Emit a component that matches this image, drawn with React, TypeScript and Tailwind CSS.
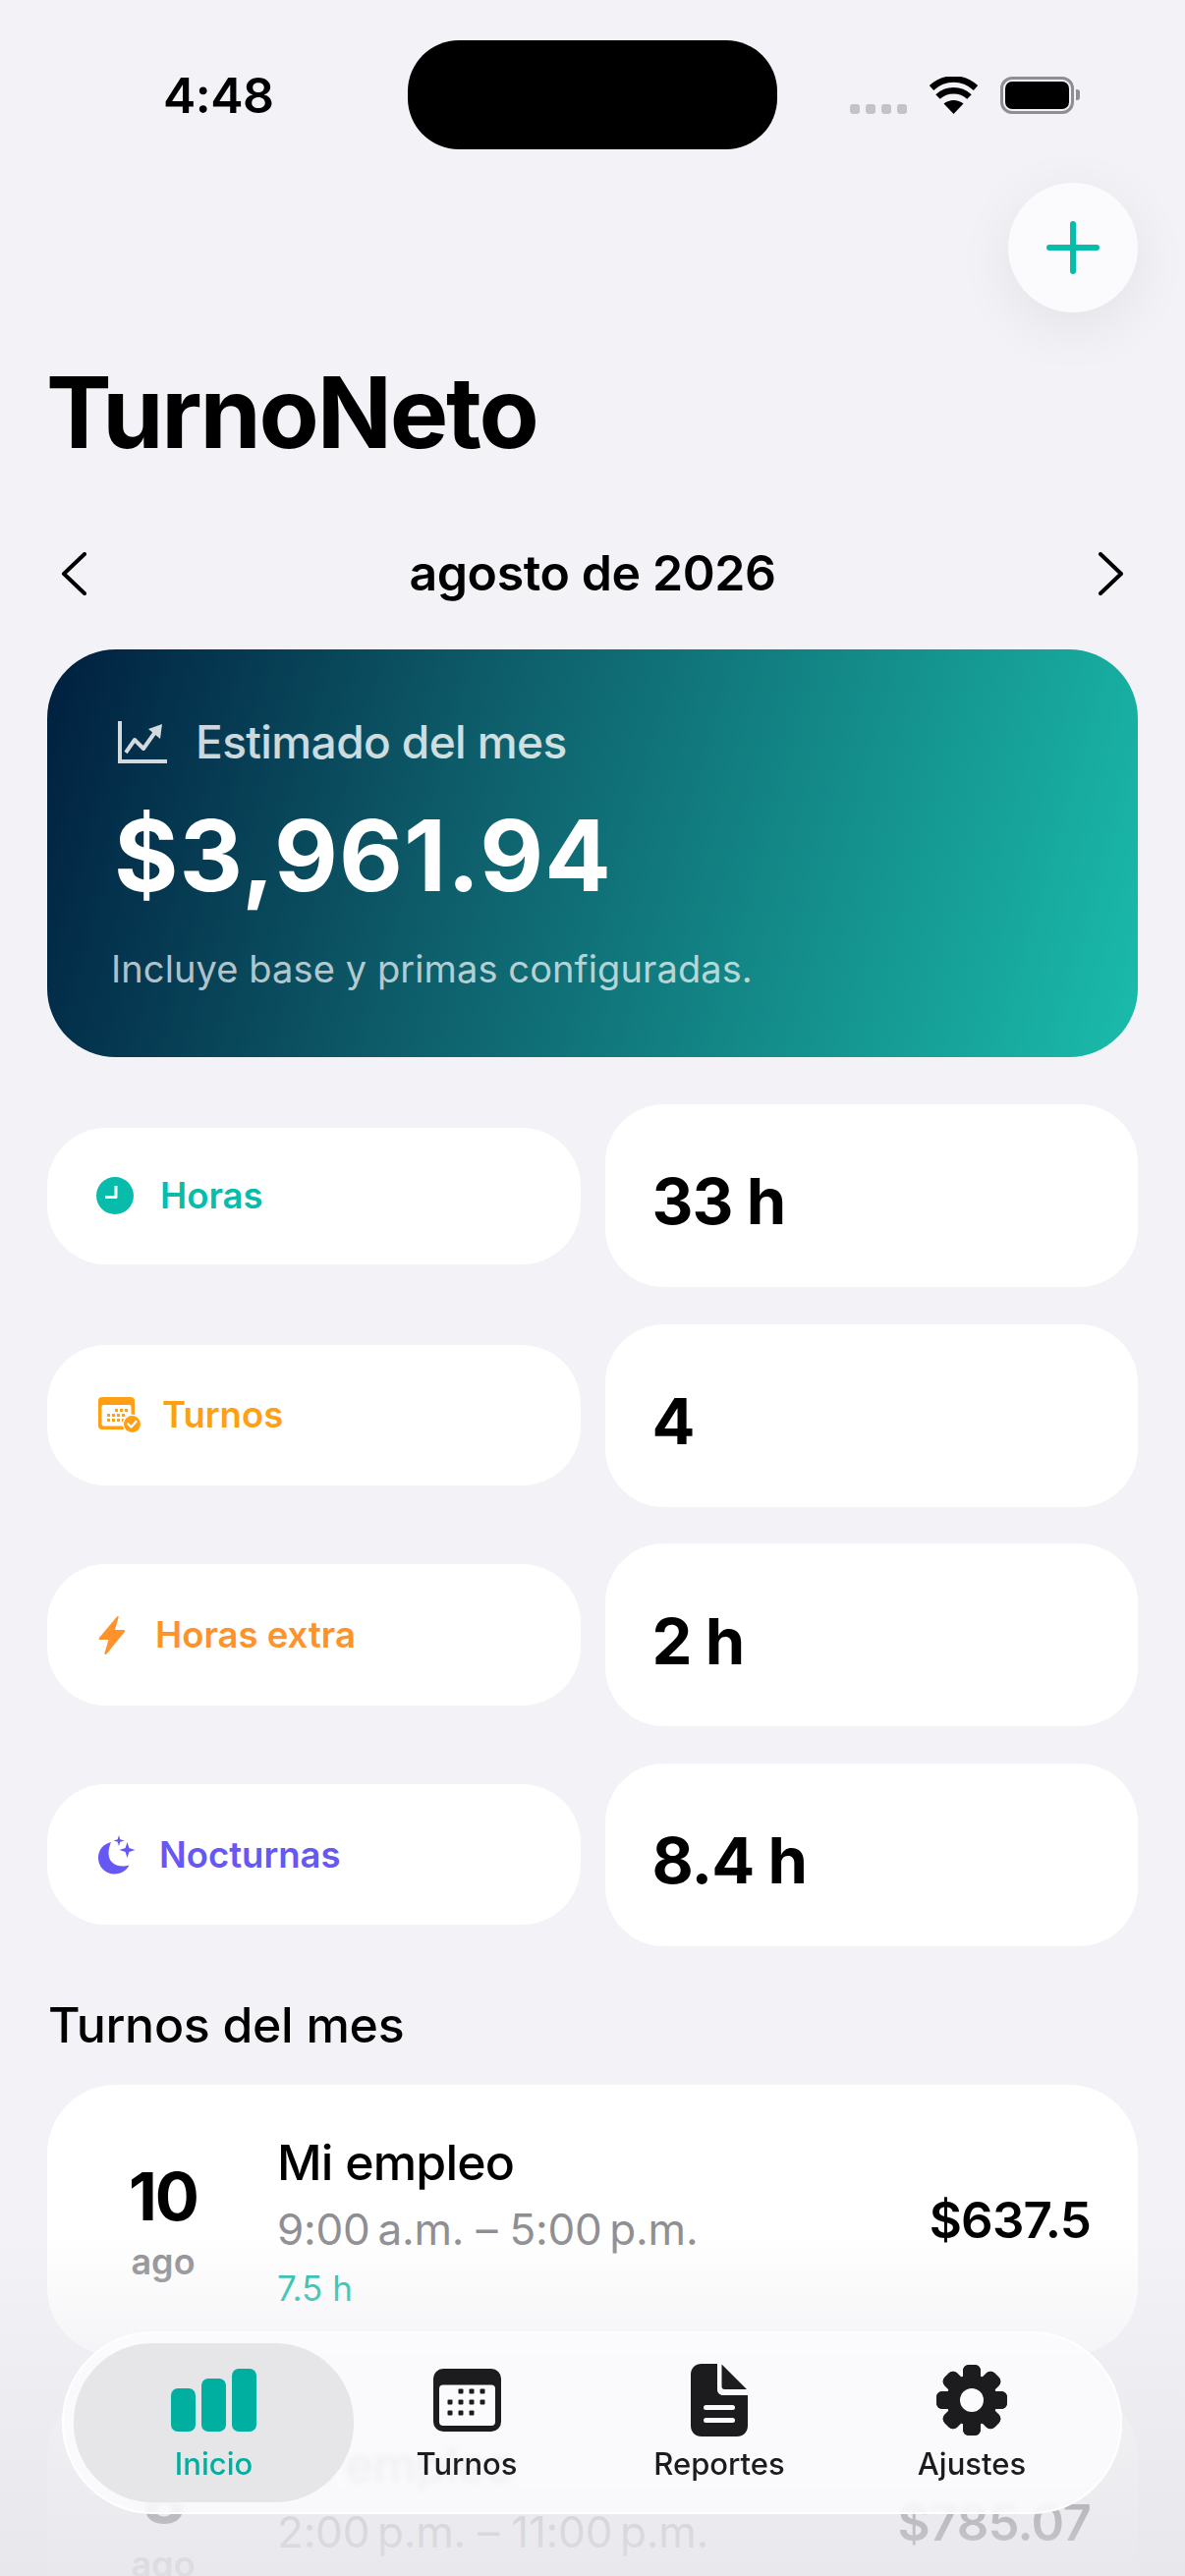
import React from "react";

const font = { fontFamily: "Inter, 'Noto Sans', sans-serif" };

const ChartIcon = () => (
  <svg width="50" height="43" viewBox="0 0 50 43" fill="none">
    <path d="M2 0v41h48" stroke="#d3dadd" strokeWidth="4" />
    <path d="M8 32l9-13 9 9 12-17" stroke="#d3dadd" strokeWidth="4" strokeLinejoin="round" />
    <path d="M31 8l14-5-2 15z" fill="#d3dadd" />
  </svg>
);

const ClockIcon = () => (
  <svg width="38" height="38" viewBox="0 0 38 38">
    <circle cx="19" cy="19" r="19" fill="#07bcaa" />
    <path d="M20 9v11.5H9" fill="none" stroke="#fff" strokeWidth="3" strokeLinejoin="round" />
  </svg>
);

const CalendarCheckIcon = () => (
  <svg width="44" height="38" viewBox="0 0 44 38">
    <rect x="0" y="0" width="37" height="33" rx="4" fill="#ff9f14" />
    <rect x="3.5" y="8" width="30" height="21.5" rx="2" fill="#fff" />
    {[
      [17, 12], [22, 12], [27, 12],
      [9, 17], [14, 17], [19, 17], [24, 17],
      [9, 22], [14, 22], [19, 22], [24, 22],
    ].map(([x, y]) => (
      <rect key={`${x}-${y}`} x={x} y={y} width="3" height="3" fill="#ff9f14" />
    ))}
    <circle cx="34.5" cy="27.5" r="10" fill="#fff" />
    <circle cx="34.5" cy="27.5" r="8.5" fill="#ff9f14" />
    <path d="M30.5 27.5l3 3 5-5.5" fill="none" stroke="#fff" strokeWidth="2.2" strokeLinecap="round" strokeLinejoin="round" />
  </svg>
);

const BoltIcon = () => (
  <svg width="28" height="41" viewBox="0 0 28 41">
    <path
      d="M19 1.5 1 23c-.8 1-.3 2 1 2h8.5L6.5 38.5c-.4 1.6 1 2 2 1L26.8 17c.8-1 .3-2-1-2H17l3.6-12.6c.4-1.6-.7-1.9-1.6-.9z"
      fill="#ff922b"
    />
  </svg>
);

const MoonIcon = () => (
  <svg width="38" height="40" viewBox="0 0 38 40">
    <path d="M13 7C5 9 0 15 0 23c0 9.500 7.500 16.500 16.500 16.500 7 0 12-3.500 15-9-10 3-21-1-21-12 0-4 1-8 2.500-11.500z" fill="#6558f5" />
    <path d="M21 0l1.300 4.200L26.500 5.500l-4.200 1.300L21 11l-1.300-4.200L15.500 5.500l4.200-1.300z" fill="#6558f5" />
    <path d="M29.500 7l1.900 6.100L37.500 15l-6.100 1.900L29.500 23l-1.900-6.100L21.500 15l6.100-1.900z" fill="#6558f5" />
  </svg>
);

const BarsIcon = () => (
  <div className="flex h-[64px] w-[87px] items-end justify-between">
    <div className="h-[44px] w-[25px] rounded-[7px] bg-[#00afa0]" />
    <div className="h-[54px] w-[25px] rounded-[7px] bg-[#00afa0]" />
    <div className="h-[64px] w-[25px] rounded-[7px] bg-[#00afa0]" />
  </div>
);

const CalendarIcon = () => (
  <svg width="69" height="64" viewBox="0 0 69 64">
    <rect width="69" height="64" rx="10" fill="#1c1c1f" />
    <rect x="6" y="16.500" width="57" height="41.500" rx="4" fill="#fbfbfe" />
    {[
      [28, 23], [39, 23], [50, 23],
      [17, 34], [28, 34], [39, 34], [50, 34],
      [17, 45], [28, 45], [39, 45],
    ].map(([x, y]) => (
      <rect key={`${x}-${y}`} x={x - 2.500} y={y - 2.500} width="5" height="5" rx="1" fill="#1c1c1f" />
    ))}
  </svg>
);

const DocIcon = () => (
  <svg width="58" height="74" viewBox="0 0 58 74">
    <path d="M27 0H11C4.500 0 0 4.500 0 11v52c0 6.500 4.500 11 11 11h36c6.500 0 11-4.500 11-11V32H33c-3.500 0-6-2.500-6-6z" fill="#1c1c1f" />
    <path d="M31.500 0.500V23c0 2 1 3 3 3H57z" fill="#1c1c1f" />
    <rect x="13" y="42" width="32" height="5" rx="2.500" fill="#fbfbfe" />
    <rect x="13" y="55" width="32" height="5" rx="2.500" fill="#fbfbfe" />
  </svg>
);

const GearIcon = () => (
  <svg width="72" height="72" viewBox="0 0 72 72">
    {[0, 45, 90, 135, 180, 225, 270, 315].map((a) => (
      <rect key={a} x="27" y="0" width="18" height="72" rx="6" fill="#1c1c1f" transform={`rotate(${a} 36 36)`} />
    ))}
    <circle cx="36" cy="36" r="26" fill="#1c1c1f" />
    <circle cx="36" cy="36" r="12" fill="#fbfbfe" />
  </svg>
);

const WifiIcon = () => (
  <svg width="51" height="38" viewBox="0 0 51 38">
    <path d="M25.500 38 15.500 27.500C21 22.800 30 22.800 35.500 27.500z" fill="#000" />
    <path d="M9.500 20.500C18.500 12 32.500 12 41.500 20.500" fill="none" stroke="#000" strokeWidth="6.500" />
    <path d="M3 11.500C16-.5 35-.5 48 11.500" fill="none" stroke="#000" strokeWidth="6.500" />
  </svg>
);

const stats = [
  { label: "Horas", value: "33 h", color: "text-[#07bcaa]", gap: "gap-[27px]", pad: "pl-[50px]", h: "h-[139px]", icon: <ClockIcon /> },
  { label: "Turnos", value: "4", color: "text-[#ff9f14]", gap: "gap-[21px]", pad: "pl-[52px]", h: "h-[143px]", icon: <CalendarCheckIcon /> },
  { label: "Horas extra", value: "2 h", color: "text-[#ff922b]", gap: "gap-[30px]", pad: "pl-[52px]", h: "h-[144px]", icon: <BoltIcon /> },
  { label: "Nocturnas", value: "8.4 h", color: "text-[#6558f5]", gap: "gap-[24px]", pad: "pl-[52px]", h: "h-[143px]", icon: <MoonIcon /> },
];

const shifts = [
  { day: "10", name: "Mi empleo", time: "9:00\u202Fa.m. – 5:00\u202Fp.m.", hours: "7.5 h", pay: "$637.5" },
  { day: "8", name: "Mi empleo", time: "2:00\u202Fp.m. – 11:00\u202Fp.m.", hours: "8.4 h", pay: "$785.07" },
];

const tabs = [
  { label: "Inicio", icon: <BarsIcon />, active: true, w: "w-[285px]" },
  { label: "Turnos", icon: <CalendarIcon />, active: false, w: "w-[230px]" },
  { label: "Reportes", icon: <DocIcon />, active: false, w: "w-[284px]" },
  { label: "Ajustes", icon: <GearIcon />, active: false, w: "w-[230px]" },
];

export default function App() {
  return (
    <div className="relative h-[2622px] w-[1206px] overflow-hidden bg-[#f2f2f7] text-black" style={font}>
      {/* status bar */}
      <div className="flex items-center pt-[41px]">
        <div className="ml-[166px] w-[249px] translate-y-[1px] text-[50px] font-semibold leading-[111px] tracking-[-0.5px]">4:48</div>
        <div className="h-[111px] w-[376px] rounded-[52px] bg-black" />
        <div className="ml-[74px] flex h-[38px] items-end gap-[6px]">
          <div className="h-[10px] w-[10px] rounded-[3px] bg-[#c4c4c8]" />
          <div className="h-[10px] w-[10px] rounded-[3px] bg-[#c4c4c8]" />
          <div className="h-[10px] w-[10px] rounded-[3px] bg-[#c4c4c8]" />
          <div className="h-[10px] w-[10px] rounded-[3px] bg-[#c4c4c8]" />
        </div>
        <div className="ml-[22px]">
          <WifiIcon />
        </div>
        <div className="ml-[22px] flex items-center gap-[2px]">
          <div className="h-[38px] w-[75px] rounded-[12px] border-[3px] border-[#8e8e93] p-[2px]">
            <div className="h-full w-full rounded-[7px] bg-black" />
          </div>
          <div className="h-[11px] w-[4px] rounded-r-[3px] bg-[#8e8e93]" />
        </div>
      </div>

      {/* add button */}
      <div className="mt-[34px] flex justify-end pr-[48px]">
        <div className="flex h-[132px] w-[132px] items-center justify-center rounded-full bg-[#fbfbfe] shadow-[0_14px_60px_rgba(0,0,0,0.07)]">
          <svg width="54" height="54" viewBox="0 0 54 54">
            <path d="M27 3v48M3 27h48" stroke="#07bcaa" strokeWidth="6" strokeLinecap="round" />
          </svg>
        </div>
      </div>

      <h1 className="mt-[52px] pl-[47px] text-[100px] font-bold leading-[100px] tracking-[-2.2px]">TurnoNeto</h1>

      {/* month picker */}
      <div className="mt-[84px] flex h-[60px] items-center justify-between px-[62px]">
        <svg width="26" height="44" viewBox="0 0 26 44">
          <path d="M24 2 3 22l21 20" fill="none" stroke="#000" strokeWidth="4" strokeLinecap="round" strokeLinejoin="round" />
        </svg>
        <div className="-translate-y-[1px] text-[50px] font-semibold tracking-[-0.4px]">agosto de 2026</div>
        <svg width="26" height="44" viewBox="0 0 26 44">
          <path d="M2 2l21 20L2 42" fill="none" stroke="#000" strokeWidth="4" strokeLinecap="round" strokeLinejoin="round" />
        </svg>
      </div>

      {/* month estimate */}
      <div className="mx-[48px] mt-[47px] h-[415px] rounded-[70px] bg-[linear-gradient(106deg,#001f3f_0%,#0d5a68_36%,#1abcab_100%)] pl-[72px] pt-[69px]">
        <div className="flex h-[50px] items-center gap-[29px]">
          <ChartIcon />
          <div className="text-[46px] font-medium tracking-[-0.6px] text-white/80">Estimado del mes</div>
        </div>
        <div className="mt-[36px] -ml-[4px] text-[100px] font-bold leading-[110px] tracking-[1px] text-white">$3,961.94</div>
        <div className="mt-[38px] -ml-[7px] text-[38px] leading-[44px] tracking-[0.1px] text-white/70">Incluye base y primas configuradas.</div>
      </div>

      {/* stats */}
      <div className="mx-[48px] mt-[48px] grid grid-cols-2 gap-x-[25px] gap-y-[37.67px]">
        {stats.map((s) => (
          <React.Fragment key={s.label}>
            <div className="flex h-[186px] items-center">
              <div className={`flex w-full items-center rounded-[60px] bg-white ${s.h} ${s.pad} ${s.gap}`}>
                {s.icon}
                <span className={`text-[36.5px] font-semibold ${s.color}`}>{s.label}</span>
              </div>
            </div>
            <div className="flex h-[186px] items-center rounded-[60px] bg-white pl-[48px] pt-[12px] text-[65px] font-bold tracking-[-1px]">{s.value}</div>
          </React.Fragment>
        ))}
      </div>

      <h2 className="mt-[50px] h-[60px] pl-[49px] text-[50px] font-medium leading-[60px] tracking-[-0.3px]">Turnos del mes</h2>

      {/* shift list */}
      <div className="mt-[31px] flex flex-col gap-[32px] px-[48px]">
        {shifts.map((s) => (
          <div key={s.pay} className="flex h-[276px] shrink-0 items-center rounded-[70px] bg-white pr-[48px]">
            <div className="flex w-[236px] shrink-0 translate-y-[3px] flex-col items-center">
              <div className="text-[67px] font-bold leading-[70px] tracking-[-2px]">{s.day}</div>
              <div className="mt-[9px] text-[36px] font-semibold leading-[44px] text-[#8e8e93]">ago</div>
            </div>
            <div className="-ml-[2px] flex-1">
              <div className="text-[50px] font-medium leading-[60px] tracking-[-0.8px]">{s.name}</div>
              <div className="mt-[8px] text-[44px] leading-[60px] tracking-[-0.2px] text-[#8e8e93]">{s.time}</div>
              <div className="mt-[10px] text-[35px] leading-[40px] text-[#1abcab]">{s.hours}</div>
            </div>
            <div className="text-[51px] font-semibold leading-[60px] tracking-[-0.8px]">{s.pay}</div>
          </div>
        ))}
      </div>

      {/* bottom fade under the tab bar */}
      <div className="pointer-events-none absolute inset-x-0 bottom-0 h-[350px] bg-gradient-to-b from-[#ededf2]/0 via-[#e9e9ee]/65 to-[#e6e6eb]/90" />

      {/* tab bar */}
      <div className="absolute bottom-[63px] left-[63px] flex h-[186px] w-[1079px] items-center rounded-[93px] bg-[#fbfbfe]/85 pl-[12px] shadow-[inset_0_0_0_2px_rgba(255,255,255,0.8)] backdrop-blur-[3px]">
        {tabs.map((t) => (
          <div
            key={t.label}
            className={`flex h-[162px] shrink-0 flex-col items-center justify-center rounded-[80px] ${t.w} ${t.active ? "bg-[#e5e5e8]/95" : ""}`}
          >
            <div className="flex h-[74px] items-center">{t.icon}</div>
            <div className={`mt-[10px] text-[31px] font-medium leading-[36px] ${t.active ? "text-[#00afa0]" : "text-[#1c1c1f]"}`}>{t.label}</div>
          </div>
        ))}
      </div>
    </div>
  );
}
